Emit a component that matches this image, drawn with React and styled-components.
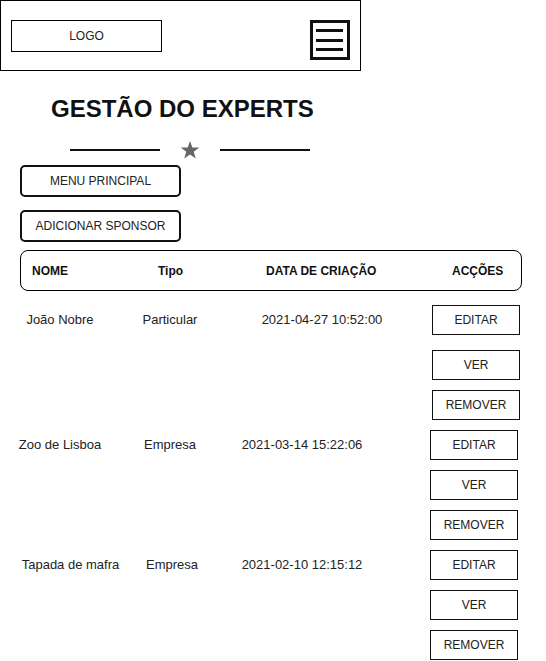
import React from 'react'
import styled, { createGlobalStyle } from 'styled-components'

const sponsors = [
  { name: 'João Nobre', type: 'Particular', date: '2021-04-27 10:52:00', cols: '120px 100px 204px 96px', first: 15 },
  { name: 'Zoo de Lisboa', type: 'Empresa', date: '2021-03-14 15:22:06', cols: '120px 100px 164px 134px', first: 10 },
  { name: 'Tapada de mafra', type: 'Empresa', date: '2021-02-10 12:15:12', cols: '141px 62px 198px 117px', first: 10 },
]

const App = () => {
  return (
    <Page>
      <GlobalStyle />
      <TopBar>
        <Logo>LOGO</Logo>
        <Burger>
          <svg width="34" height="34" viewBox="0 0 34 34">
            <rect x="3" y="6" width="27" height="3" fill="#111" />
            <rect x="3" y="16" width="27" height="3" fill="#111" />
            <rect x="3" y="25" width="27" height="3" fill="#111" />
          </svg>
        </Burger>
      </TopBar>

      <Title>GESTÃO DO EXPERTS</Title>
      <Divider>
        <Rule />
        <svg width="18" height="20" viewBox="1 0 18 20">
          <polygon points="10,1 12.3,7.6 19.3,7.6 13.7,11.8 15.8,18.6 10,14.5 4.2,18.6 6.3,11.8 0.7,7.6 7.7,7.6" fill="#666" />
        </svg>
        <Rule />
      </Divider>

      <NavButton>MENU PRINCIPAL</NavButton>
      <NavButton $mt={13}>ADICIONAR SPONSOR</NavButton>

      <TableHead>
        <HeadCell>NOME</HeadCell>
        <HeadCell>Tipo</HeadCell>
        <HeadCell>DATA DE CRIAÇÃO</HeadCell>
        <HeadCell>ACÇÕES</HeadCell>
      </TableHead>

      <Rows>
        {sponsors.map((s) => (
          <Row key={s.name} $cols={s.cols}>
            <Cell>{s.name}</Cell>
            <Cell>{s.type}</Cell>
            <Cell>{s.date}</Cell>
            <Actions $first={s.first}>
              <ActionButton>EDITAR</ActionButton>
              <ActionButton>VER</ActionButton>
              <ActionButton>REMOVER</ActionButton>
            </Actions>
          </Row>
        ))}
      </Rows>
    </Page>
  )
}

export default App

const GlobalStyle = createGlobalStyle`
body {
  margin: 0;
  background: #fff;
  font-family: "Liberation Sans", Arial, sans-serif;
}
`

const Page = styled.div`
width: 546px;
min-height: 661px;
color: #222;
`

const TopBar = styled.div`
box-sizing: border-box;
width: 361px;
height: 71px;
border: 1px solid #000;
display: flex;
justify-content: space-between;
align-items: flex-start;
padding: 19px 10px 0 10px;
`

const Logo = styled.div`
box-sizing: border-box;
width: 151px;
height: 32px;
border: 1px solid #000;
display: flex;
align-items: center;
justify-content: center;
font-size: 12px;
color: #222;
`

const Burger = styled.div`
box-sizing: border-box;
width: 40px;
height: 40px;
border: 3px solid #111;
display: flex;
`

const Title = styled.h1`
margin: 24px 0 0 0;
padding-left: 51px;
font-size: 24px;
line-height: 28px;
font-weight: bold;
color: #111;
`

const Divider = styled.div`
display: flex;
align-items: center;
gap: 21px;
height: 20px;
margin-top: 17px;
padding-left: 70px;
`

const Rule = styled.div`
width: 90px;
height: 2px;
background: #111;
`

const NavButton = styled.div`
box-sizing: border-box;
width: 161px;
height: 32px;
margin: ${p => p.$mt || 5}px 0 0 20px;
border: 2px solid #111;
border-radius: 5px;
display: flex;
align-items: center;
justify-content: center;
font-size: 12px;
color: #222;
`

const TableHead = styled.div`
box-sizing: border-box;
width: 502px;
height: 41px;
margin: 8px 0 0 20px;
border: 1px solid #000;
border-radius: 8px;
display: grid;
grid-template-columns: 126px 108px 186px auto;
align-items: center;
padding-left: 11px;
`

const HeadCell = styled.div`
font-size: 12px;
font-weight: bold;
color: #111;
`

const Rows = styled.div`
display: flex;
flex-direction: column;
gap: 10px;
margin-top: 14px;
`

const Row = styled.div`
display: grid;
grid-template-columns: ${p => p.$cols};
align-items: start;
`

const Cell = styled.div`
height: 30px;
line-height: 30px;
text-align: center;
font-size: 13px;
color: #222;
white-space: nowrap;
`

const Actions = styled.div`
justify-self: end;
display: flex;
flex-direction: column;
gap: 10px;
& > :first-child {
  margin-bottom: ${p => p.$first - 10}px;
}
`

const ActionButton = styled.div`
box-sizing: border-box;
width: 88px;
height: 30px;
border: 1px solid #111;
display: flex;
align-items: center;
justify-content: center;
font-size: 12px;
color: #222;
`
